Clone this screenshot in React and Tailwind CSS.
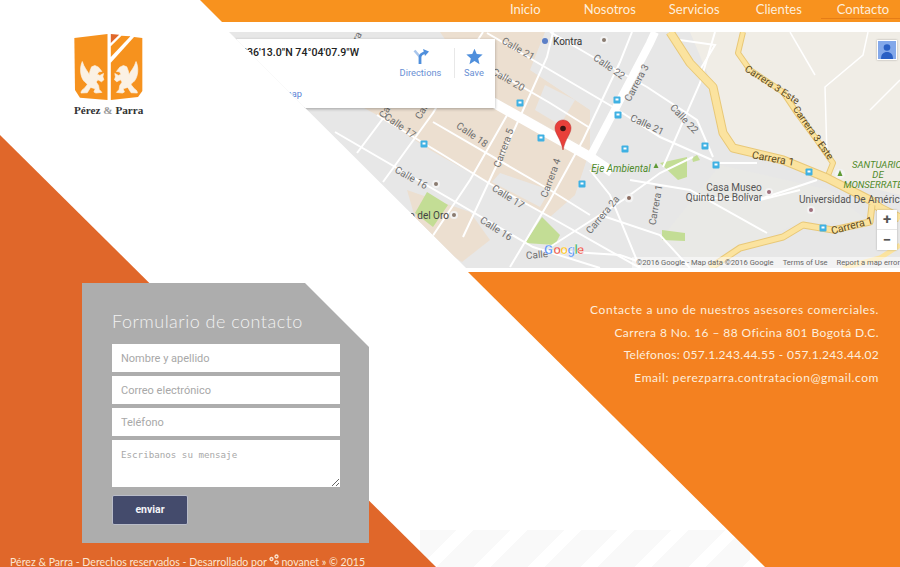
import React from 'react';

const navItems = ['Inicio', 'Nosotros', 'Servicios', 'Clientes'];

const contactLines = [
  { text: 'Contacte a uno de nuestros asesores comerciales.', cls: 'tracking-[0.59px]' },
  { text: 'Carrera 8 No. 16 – 88 Oficina 801 Bogotá D.C.', cls: 'tracking-[0.42px]' },
  { text: 'Teléfonos: 057.1.243.44.55 - 057.1.243.44.02', cls: 'tracking-[0.28px]' },
  { text: 'Email: perezparra.contratacion@gmail.com', cls: 'tracking-[0.56px]' },
];

// all map coordinates are page pixels, the svg viewBox starts at the map corner
const thinRoads = [
  'M335 132L533 247L600 268',
  'M377 115L440 153L487 182L550 217L640 268',
  'M433 122L550 190L590 215',
  'M487 33L550 70L613 107L660 137L712 160',
  'M493 70L550 103L590 128',
  'M550 32L593 57L647 87L697 120L713 157',
  'M463 237L493 173L515 128L547 57L553 32',
  'M383 182L433 113L463 63L483 32',
  'M357 153L387 113',
  'M510 267L550 200L583 140L620 62L632 32',
  'M430 240L470 180L510 110',
  'M550 247L623 200L660 173L693 157',
  'M630 180L690 190L767 233',
  'M663 167L700 83L715 32',
  'M590 170L610 195L640 268',
  'M717 163L757 163',
  'M757 200L817 180',
  'M690 197L760 200L800 190',
  'M680 40L715 45L700 70',
  'M600 215L660 235L690 268',
  'M540 250L620 255L640 262',
];

const terrainRoads = ['M827 157L825 87L863 55L868 32', 'M790 32L815 75', 'M870 110L900 80'];

const busStops = [
  [617, 100], [618, 115], [625, 149], [705, 146], [716, 165], [809, 172],
  [823, 228], [582, 184], [520, 103], [541, 138], [424, 144],
];

const labels = [
  ['Calle 21', 518, 52, 30], ['Calle 20', 508, 83, 30], ['Calle 22', 609, 70, 35],
  ['Carrera 3', 637, 86, -62], ['Calle 21', 647, 128, 25],
  ['Calle 22', 684, 122, 47], ['Calle 18', 472, 138, 35], ['Calle 17', 400, 129, 35],
  ['Calle 16', 411, 181, 30], ['Calle 17', 508, 200, 32], ['Calle 16', 496, 232, 32],
  ['Carrera 5', 504, 151, -70], ['Carrera 4', 551, 181, -70], ['Carrera 2a', 603, 218, -50],
  ['Carrera 1', 656, 208, -80], ['Calle', 537, 258, -5],
  ['Carrera 12', 355, 44, -60], ['Carrera 9', 392, 103, -60], ['Carrera 7', 428, 104, -60],
];

const Label = ({ text, x, y, angle }) => (
  <text x={x} y={y} textAnchor="middle" fontSize="10" fill="#6f6f6f" transform={`rotate(${angle} ${x} ${y - 3})`}>
    {text}
  </text>
);

const MapDrawing = () => (
  <svg viewBox="229 32 671 236" className="absolute inset-0 w-full h-full">
    <rect x="229" y="32" width="671" height="236" fill="#e7e7e7" />
    <polygon points="690,32 900,32 900,195 830,178 783,160 733,148 723,133 713,87" fill="#f0ede6" />
    <polygon points="720,165 830,190 872,225 800,222 740,250 700,268 660,240" fill="#e9e9e6" />

    {/* beige blocks */}
    <polygon points="340,95 420,60 480,90 590,150 575,195 550,217 487,182 430,150 377,115" fill="#ecdfd0" />
    <polygon points="440,32 545,32 530,70 590,110 590,150 480,90" fill="#ecdfd0" />
    <polygon points="407,190 470,212 490,240 462,262 420,235" fill="#ecdfd0" />
    <polygon points="500,173 550,190 540,207 492,182" fill="#e7e7e7" />
    <polygon points="545,85 575,100 560,125 535,110" fill="#e7e7e7" />

    {/* parks */}
    <polygon points="660,163 687,157 687,177 678,180" fill="#c3dd95" />
    <polygon points="662,230 685,233 685,241 662,240" fill="#c3dd95" />
    <polygon points="427,192 448,205 433,227 415,213" fill="#c3dd95" />
    <polygon points="525,243 542,217 560,235 555,245" fill="#c3dd95" />
    <polygon points="692,158 697,155 700,160 693,162" fill="#c3dd95" />

    {/* streets */}
    {thinRoads.map((d) => (
      <path key={d} d={d} fill="none" stroke="#fff" strokeWidth="2" />
    ))}
    {terrainRoads.map((d) => (
      <path key={d} d={d} fill="none" stroke="#fff" strokeWidth="1.5" />
    ))}
    <path d="M480 95L590 157L612 172" fill="none" stroke="#fff" strokeWidth="10" />
    <path d="M590 157L650 43L655 32" fill="none" stroke="#fff" strokeWidth="8" />

    {/* yellow roads */}
    <g fill="none" strokeLinejoin="round">
      <path d="M743 32L738 53L750 70L783 92L797 113L817 140L833 163L827 178" stroke="#e8c878" strokeWidth="6" />
      <path d="M743 32L738 53L750 70L783 92L797 113L817 140L833 163L827 178" stroke="#fbe39f" strokeWidth="4" />
      <path d="M670 32L690 63L713 87L723 133L733 148L783 160L827 178L870 200L880 208L900 218" stroke="#e8c878" strokeWidth="9" />
      <path d="M670 32L690 63L713 87L723 133L733 148L783 160L827 178L870 200L880 208L900 218" stroke="#fbe39f" strokeWidth="7" />
      <path d="M710 268L740 248L783 237L803 225L833 230L870 222L872 205" stroke="#e8c878" strokeWidth="7" />
      <path d="M710 268L740 248L783 237L803 225L833 230L870 222L872 205" stroke="#fbe39f" strokeWidth="5" />
      <path d="M843 268L880 258L900 245" stroke="#fbe39f" strokeWidth="5" />
    </g>

    {busStops.map(([x, y]) => (
      <g key={`${x}-${y}`}>
        <rect x={x - 3.5} y={y - 3.5} width="7" height="7" rx="1" fill="#3fb1e3" />
        <rect x={x - 1.5} y={y - 1.5} width="3" height="2" fill="#fff" />
      </g>
    ))}

    {labels.map(([text, x, y, angle]) => (
      <Label key={`${text}-${x}`} text={text} x={x} y={y} angle={angle} />
    ))}

    {/* yellow road labels */}
    <g fontSize="10" fill="#5c4a1e" textAnchor="middle">
      <text x="772" y="88" transform="rotate(33 772 85)">Carrera 3 Este</text>
      <text x="813" y="136" transform="rotate(55 813 133)">Carrera 3 Este</text>
      <text x="773" y="162" fontSize="10.5" transform="rotate(10 773 159)">Carrera 1</text>
      <text x="852" y="229" fontSize="10.5" transform="rotate(-15 852 226)">Carrera 1</text>
    </g>

    {/* places */}
    <g fontSize="10" fill="#555">
      <text x="553" y="45" fill="#333">Kontra</text>
      <text x="734" y="190.500" textAnchor="middle">Casa Museo</text>
      <text x="724" y="200.500" textAnchor="middle">Quinta De Bolívar</text>
      <text x="799" y="203">Universidad De América</text>
      <text x="449" y="219" textAnchor="end" fill="#444">Museo del Oro</text>
    </g>
    <g fontSize="9.500" fontStyle="italic" fill="#4f8a2a" textAnchor="middle">
      <text x="621" y="172" fontSize="10">Eje Ambiental</text>
      <text x="877" y="168">SANTUARIO</text>
      <text x="878" y="178">DE</text>
      <text x="873" y="188">MONSERRATE</text>
    </g>

    {/* place markers */}
    <circle cx="545" cy="41" r="3" fill="#5b7fc7" />
    <circle cx="604" cy="40" r="4" fill="#f3f3f3" />
    <circle cx="604" cy="40" r="2" fill="#8a7b70" />
    <circle cx="629" cy="198" r="4.500" fill="#f3f3f3" />
    <circle cx="629" cy="198" r="2" fill="#8d6e63" />
    <circle cx="769" cy="192" r="4" fill="#f3f3f3" />
    <circle cx="769" cy="192" r="2" fill="#a0707c" />
    <circle cx="811" cy="210" r="4" fill="#f3f3f3" />
    <circle cx="811" cy="210" r="2" fill="#a0707c" />
    <circle cx="436" cy="184" r="4" fill="#f3f3f3" />
    <circle cx="436" cy="184" r="2" fill="#8a7b70" />
    <circle cx="454" cy="215" r="4" fill="#f3f3f3" />
    <circle cx="454" cy="215" r="2" fill="#8a7b70" />
    <path d="M656 163l-2.500 5h5z" fill="#5f9a34" />
    <circle cx="840" cy="174" r="5" fill="#f3f3f3" />
    <path d="M840 170l-2.500 6h5z" fill="#5f9a34" />

    {/* marker pin */}
    <path d="M563 120c-4.500 0-8 3.600-8 8 0 6 5.500 10 8 22 2.500-12 8-16 8-22 0-4.400-3.500-8-8-8z" fill="#e8403a" stroke="#b33" strokeWidth="0.5" />
    <circle cx="563" cy="128.500" r="2.800" fill="#3a1512" />

    {/* google wordmark */}
    <g fontSize="13" fontWeight="500" stroke="#fff" strokeWidth="0.3">
      <text x="544" y="254" fill="#4285f4">G</text>
      <text x="553.500" y="254" fill="#ea4335">o</text>
      <text x="560.500" y="254" fill="#fbbc05">o</text>
      <text x="567.500" y="254" fill="#4285f4">g</text>
      <text x="574.500" y="254" fill="#34a853">l</text>
      <text x="577" y="254" fill="#ea4335">e</text>
    </g>
  </svg>
);

const DirectionsIcon = () => (
  <svg viewBox="0 0 16 17" className="w-4 h-[17px]">
    <path d="M1.500 2.500L7 9" fill="none" stroke="#a9c6ec" strokeWidth="2.600" />
    <path d="M7 16V9.500C7 6.500 9 5.500 12 4.500" fill="none" stroke="#4f8fdc" strokeWidth="2.800" />
    <path d="M10 1L16 3.500L12 8z" fill="#4f8fdc" />
  </svg>
);

const StarIcon = () => (
  <svg viewBox="0 0 24 24" className="w-[17px] h-[17px]">
    <path d="M12 1l3.200 7.600 8.300.7-6.300 5.400 1.900 8.100L12 18.500l-7.100 4.300 1.900-8.100L.5 9.300l8.300-.7z" fill="#4f8fdc" />
  </svg>
);

const InfoCard = () => (
  <div className="absolute left-0 top-[7px] w-[266px] h-[69px] flex bg-white shadow-[0_1px_3px_rgba(0,0,0,0.3)]">
    <div className="w-[130px] shrink-0">
      <div className="flex justify-end pt-[6px] whitespace-nowrap text-[10.600px] leading-[16px] font-medium text-[#222]">
        <span>4°36'13.0"N 74°04'07.9"W</span>
      </div>
      <div className="flex justify-end pr-[57px] pt-[27px] whitespace-nowrap text-[9.300px] leading-[12px] text-[#5b83d6]">
        <span>View larger map</span>
      </div>
    </div>
    <div className="flex-1 flex items-start pt-[9px] text-[9.300px] leading-[12px] text-[#6a8fd4]">
      <div className="w-[95px] flex flex-col items-center gap-[2px] pl-[28px]">
        <DirectionsIcon />
        <span>Directions</span>
      </div>
      <div className="w-px h-[30px] bg-[#e8e8e8]" />
      <div className="w-[38px] flex flex-col items-center gap-[2px]">
        <StarIcon />
        <span>Save</span>
      </div>
    </div>
  </div>
);

const MapControls = () => (
  <>
    <div className="absolute right-[3px] top-[8px] w-5 h-5 bg-white shadow-[0_0_2px_rgba(0,0,0,0.3)] p-px">
      <div className="w-full h-full bg-[#83a8ea] overflow-hidden">
        <svg viewBox="0 0 18 18" className="w-full h-full">
          <circle cx="9" cy="6.500" r="3.300" fill="#2a5fc4" />
          <path d="M3 18c0-5 2.500-7 6-7s6 2 6 7z" fill="#2a5fc4" />
        </svg>
      </div>
    </div>
    <div className="absolute right-[3px] top-[178px] w-5 h-10 flex flex-col bg-white text-[#555] font-bold shadow-[0_0_2px_rgba(0,0,0,0.25)]">
      <span className="h-5 flex items-center justify-center text-[15px] leading-none border-b border-[#e6e6e6]">+</span>
      <span className="h-5 flex items-center justify-center text-[15px] leading-none">−</span>
    </div>
    <div className="absolute right-0 bottom-0 flex gap-[9px] pl-1 h-[11px] items-center whitespace-nowrap overflow-hidden text-[7.600px] leading-[11px] text-[#666] bg-white/50">
      <span>©2016 Google - Map data ©2016 Google</span>
      <span>Terms of Use</span>
      <span>Report a map error</span>
    </div>
  </>
);

const Griffin = ({ flip }) => (
  <path
    transform={flip ? 'translate(656 0) scale(-1 1)' : undefined}
    d="M247 186C238 205 241 232 252 245C256 250 262 252 262 256L252 268C248 270 243 274 243 281L262 280L272 264L286 268L282 278L288 281L306 279L298 270L296 258L289 248L294 241L305 247L312 241L309 232L311 222L300 228L292 224L297 217L306 216L296 203L285 198L275 202L270 215L268 226C263 214 252 204 247 186Z"
    fill="#fbf1e4"
    stroke="#fbf1e4"
    strokeWidth="2"
    strokeLinejoin="round"
  />
);

const Logo = () => (
  <div className="w-[229px] shrink-0 pl-[73px] pt-px">
    <svg viewBox="220 100 212 205" className="w-[71px] h-[68px]">
      <polygon points="223,115 323,103 323,302 240,295 225,272" fill="#f6921e" />
      <polygon points="333,190 403,112 428,115 428,275 415,293 333,302" fill="#f6921e" />
      <polygon points="333,103 358,105 333,130" fill="#e0672a" />
      <polygon points="333,172 333,140 365,108 392,110" fill="#f6921e" />
      <Griffin />
      <Griffin flip />
    </svg>
    <p className="mt-[3px] w-[71px] pl-px whitespace-nowrap text-[11.200px] leading-[12px] font-bold font-['Liberation_Serif',serif] text-[#333]">
      Pérez <span className="text-[#999]">&amp;</span> Parra
    </p>
  </div>
);

const ContactForm = () => (
  <form className="ml-[82px] mt-[11px] w-[287px] h-[260px] shrink-0 pl-[30px] pt-[26px] bg-[#adadad] [clip-path:polygon(0_0,223px_0,100%_64px,100%_100%,0_100%)]">
    <h2 className="mb-[11px] text-[18px] leading-[24px] font-light tracking-[0.49px] whitespace-nowrap text-[#f1f1f1]">
      Formulario de contacto
    </h2>
    <div className="w-[228px] flex flex-col gap-1">
      <input placeholder="Nombre y apellido" className="h-7 pl-[9px] pr-2 bg-white font-[Roboto,sans-serif] text-[11px] placeholder:text-[#a8a8a8]" />
      <input placeholder="Correo electrónico" className="h-7 pl-[9px] pr-2 bg-white font-[Roboto,sans-serif] text-[11px] placeholder:text-[#a8a8a8]" />
      <input placeholder="Teléfono" className="h-7 pl-[9px] pr-2 bg-white font-[Roboto,sans-serif] text-[11px] placeholder:text-[#a8a8a8]" />
      <textarea placeholder="Escribanos su mensaje" className="block h-[47px] pl-[9px] pr-2 pt-[9px] bg-white font-['DejaVu_Sans_Mono',monospace] text-[9.200px] leading-[12px] placeholder:text-[#a8a8a8]" />
    </div>
    <button type="button" className="mt-2 w-[76px] h-[30px] bg-[#444b6c] border border-[#b9bcc8] rounded-[2px] font-[Roboto,sans-serif] text-[10.500px] font-bold text-[#f4f4f8]">
      enviar
    </button>
  </form>
);

const NovanetIcon = () => (
  <svg viewBox="0 0 11 11" className="inline-block w-[11px] h-[11px] mr-px align-[1px]">
    <g fill="none" stroke="#fbe6d3" strokeWidth="1.300">
      <circle cx="2.500" cy="5" r="1.500" />
      <circle cx="7.500" cy="2.500" r="1.500" />
      <circle cx="7.500" cy="8.500" r="1.700" />
    </g>
  </svg>
);

export default function App() {
  return (
    <div className="relative w-[900px] h-[567px] overflow-hidden bg-white font-[Lato,sans-serif]">
      {/* background shapes */}
      <div className="absolute left-[420px] top-[530px] w-[330px] h-[37px] bg-[repeating-linear-gradient(135deg,#f9f9f9_0,#f9f9f9_26px,#ffffff_26px,#ffffff_38px)]" />
      <div className="absolute inset-0 bg-[#e0672a] [clip-path:polygon(0_135px,436px_567px,0_567px)]" />
      <div className="absolute inset-0 bg-[#f48120] [clip-path:polygon(468px_272px,900px_272px,900px_567px,765px_567px)]" />

      <div className="relative">
        <header className="ml-[200px] h-[22px] flex justify-end bg-[#f8921e] [clip-path:polygon(0_0,100%_0,100%_100%,22px_100%)]">
          <nav className="flex text-[13px] leading-[19px] text-[#fdeedd]">
            {navItems.map((item) => (
              <a key={item} className="w-[84.500px] h-[19px] text-center">{item}</a>
            ))}
            <a className="w-[79px] h-[19px] pl-[5px] text-center border-b border-[#e67d16]">Contacto</a>
          </nav>
        </header>

        <section className="mt-[10px] h-[236px] flex">
          <Logo />
          <div className="relative flex-1 overflow-hidden font-[Roboto,sans-serif] [clip-path:polygon(0_0,100%_0,100%_100%,237px_100%)]">
            <MapDrawing />
            <InfoCard />
            <MapControls />
          </div>
        </section>

        <section className="mt-1 flex">
          <ContactForm />
          <div className="flex-1 pt-[27px] pr-[21px] text-right text-[12px] leading-[22.700px] whitespace-nowrap text-[#fdeedd]">
            {contactLines.map((line) => (
              <p key={line.text} className={line.cls}>{line.text}</p>
            ))}
          </div>
        </section>

        <footer className="pl-[10px] pt-[11px] whitespace-nowrap text-[10.600px] leading-[16px] text-[#fbe6d3]">
          Pérez &amp; Parra - Derechos reservados - Desarrollado por <NovanetIcon />novanet » © 2015
        </footer>
      </div>
    </div>
  );
}
